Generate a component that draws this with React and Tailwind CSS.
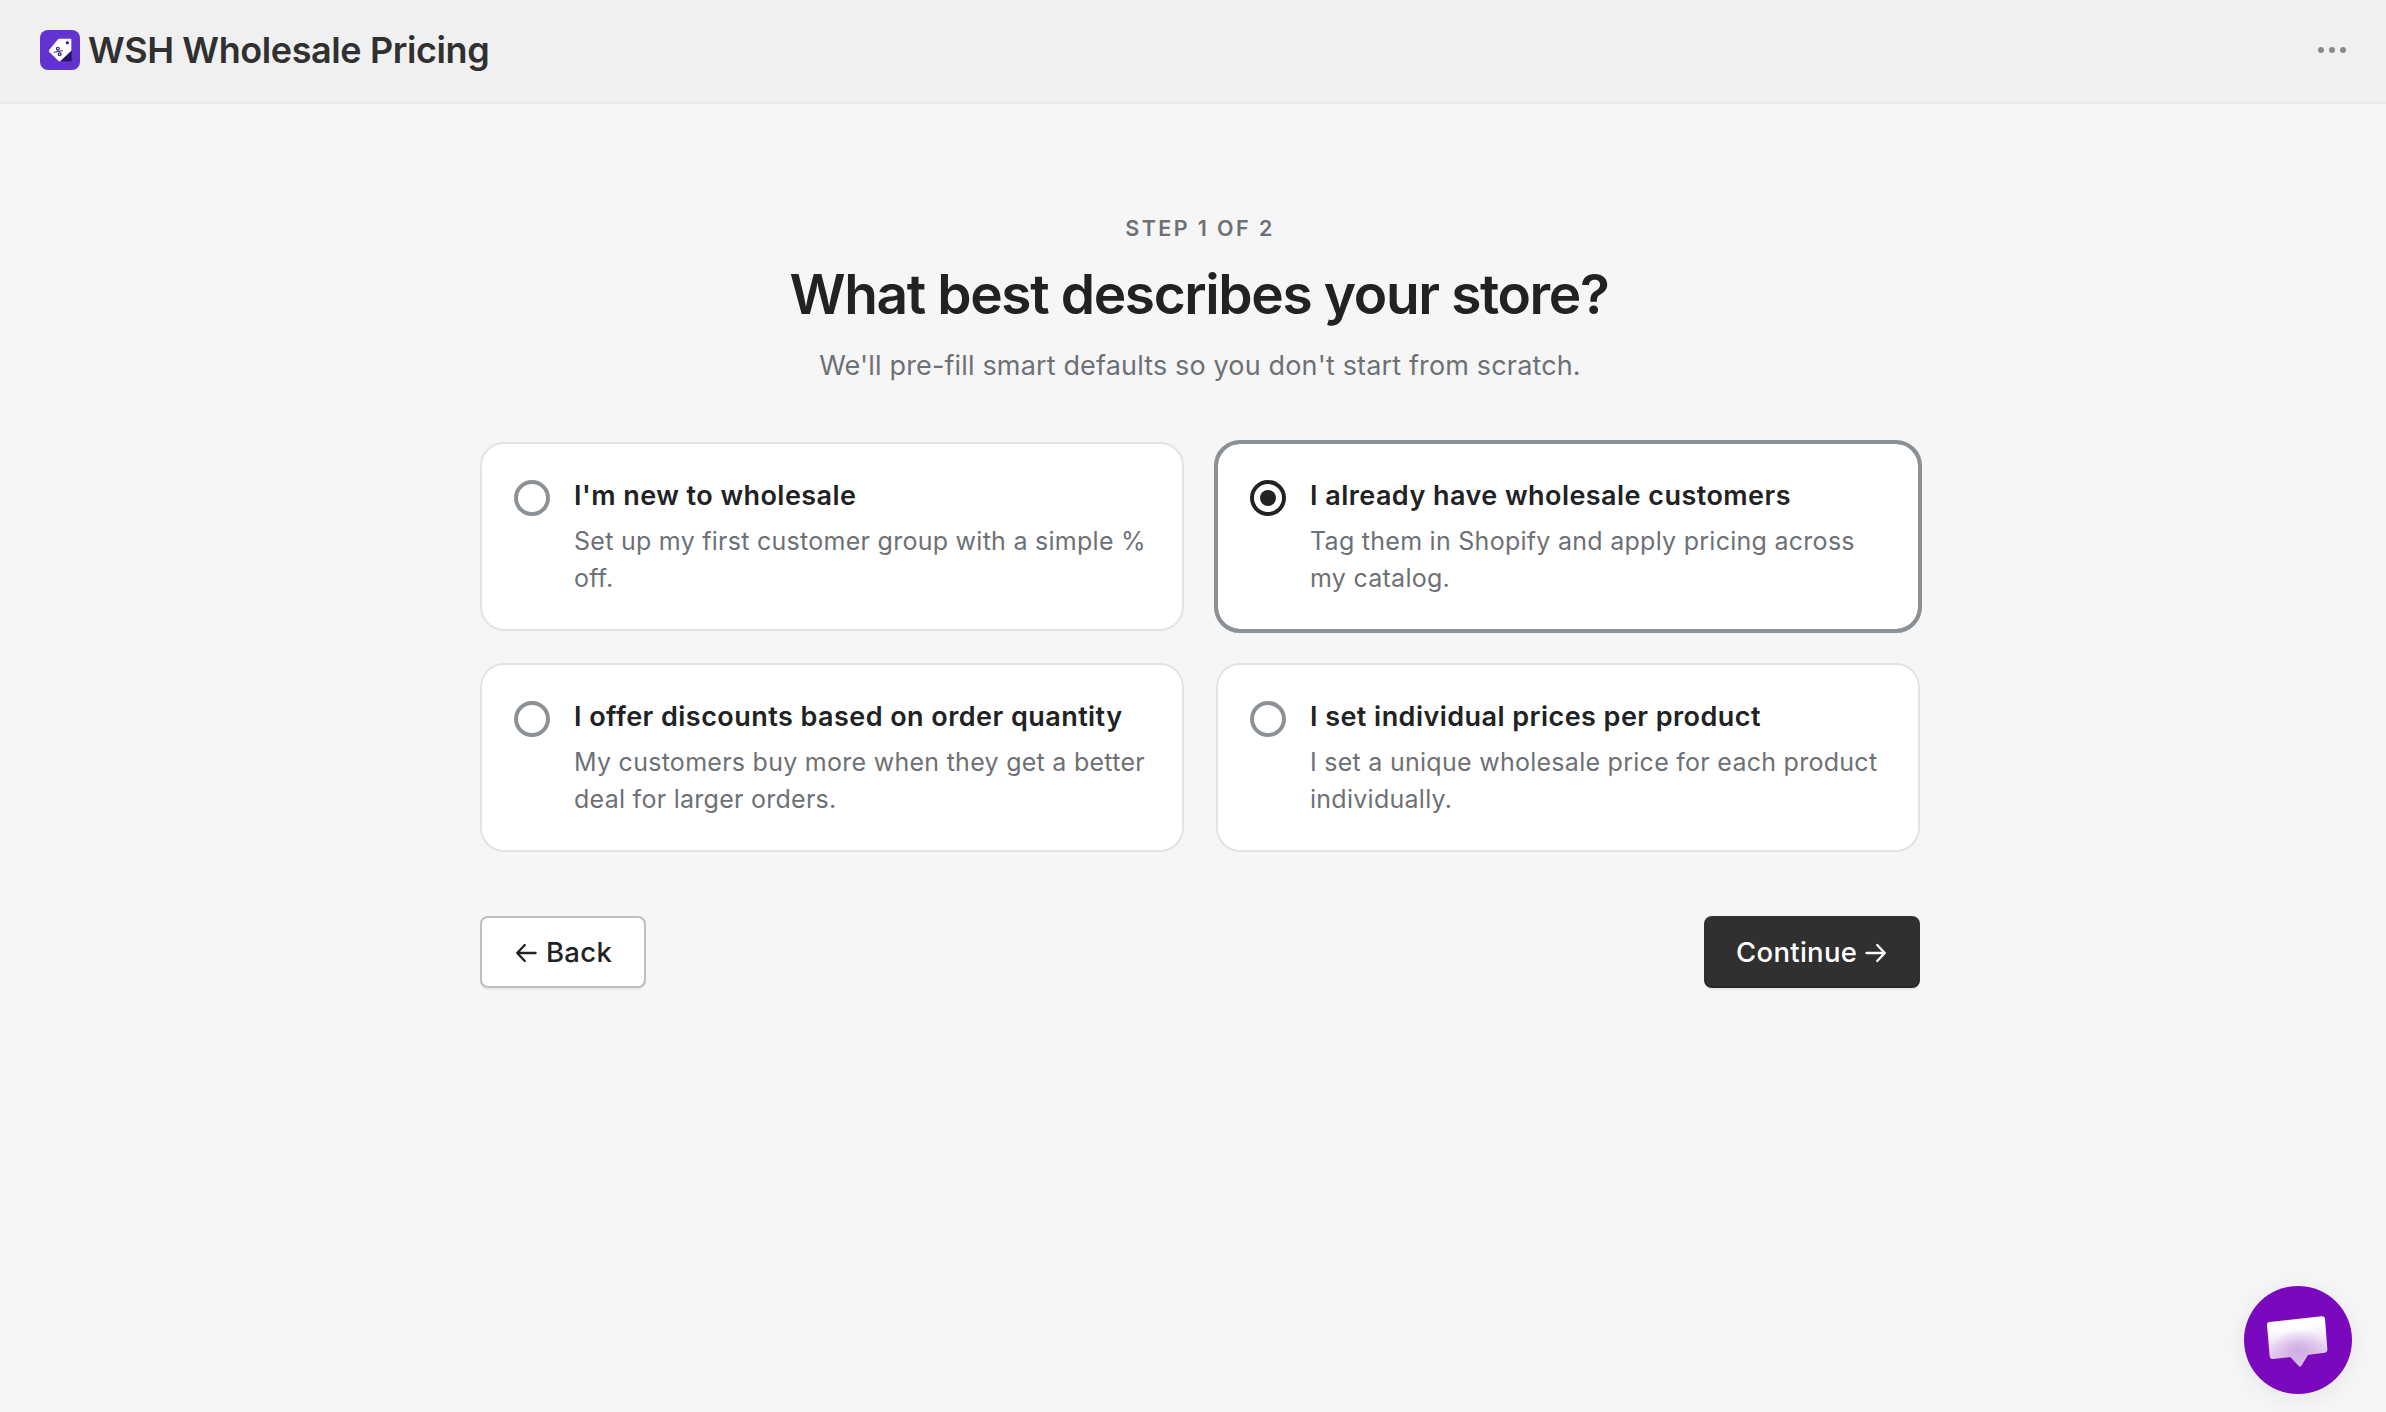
const OPTIONS = [
  {
    title: "I'm new to wholesale",
    text: "Set up my first customer group with a simple % off.",
  },
  {
    title: "I already have wholesale customers",
    text: "Tag them in Shopify and apply pricing across my catalog.",
    selected: true,
  },
  {
    title: "I offer discounts based on order quantity",
    text: "My customers buy more when they get a better deal for larger orders.",
  },
  {
    title: "I set individual prices per product",
    text: "I set a unique wholesale price for each product individually.",
  },
];

function Logo() {
  return (
    <svg viewBox="0 0 120 120" className="size-10 shrink-0">
      <rect width="120" height="120" rx="24" fill="#6333cf" />
      <path d="M94 62v31H63z" fill="#26136b" stroke="#26136b" strokeWidth="2" strokeLinejoin="round" />
      <path
        d="M58 26 92 26a2 2 0 0 1 2 2v34L62 92a5 5 0 0 1-7 0L28 66a5 5 0 0 1 0-7L54 28a5 5 0 0 1 4-2z"
        fill="#fff"
      />
      <circle cx="82" cy="38" r="4.600" fill="#26136b" />
      <g fill="none" stroke="#2b1a72" strokeWidth="3.600">
        <circle cx="53.500" cy="56" r="4.200" />
        <circle cx="59" cy="73" r="4.200" />
        <path d="m42 67 26-5" strokeWidth="3" />
      </g>
    </svg>
  );
}

function Header() {
  return (
    <header className="flex h-[104px] items-center justify-between border-b-2 border-[#e9e9e9] bg-[#f0f0f0] px-10 pb-0.5">
      <div className="flex items-center gap-2">
        <Logo />
        <span className="text-[36px] leading-10 font-semibold tracking-[-0.4px] text-[#303030]">
          WSH Wholesale Pricing
        </span>
      </div>
      <button className="flex gap-[5px]" aria-label="More actions">
        <span className="size-1.5 rounded-full bg-[#8a8a8a]" />
        <span className="size-1.5 rounded-full bg-[#8a8a8a]" />
        <span className="size-1.5 rounded-full bg-[#8a8a8a]" />
      </button>
    </header>
  );
}

function Radio({ selected }) {
  return (
    <span
      className={
        "flex size-9 shrink-0 items-center justify-center rounded-full border-4 bg-white " +
        (selected ? "border-[#202223]" : "border-[#8c9196]")
      }
    >
      {selected && <span className="size-4 rounded-full bg-[#202223]" />}
    </span>
  );
}

function OptionCard({ title, text, selected }) {
  return (
    <div
      className={
        "flex h-[189px] gap-6 rounded-[24px] border-2 bg-white py-[34px] pr-8 pl-8 " +
        (selected ? "border-[#8c9196] outline-4 -outline-offset-2 outline-[#8c9196]" : "border-[#e3e3e3]")
      }
    >
      <div className="pt-0.5">
        <Radio selected={selected} />
      </div>
      <div className="min-w-0 flex-1 pt-px">
        <h2 className="text-[27px] leading-[34px] font-semibold tracking-[0.45px] text-[#202223]">{title}</h2>
        <p className="mt-2.5 text-[25px] leading-[37px] tracking-[0.27px] text-[#6d7175]">{text}</p>
      </div>
    </div>
  );
}

function Arrow({ left }) {
  return (
    <svg
      viewBox="0 0 22 22"
      className={left ? "w-[22px]" : "w-[22px] rotate-180"}
      fill="none"
      stroke="currentColor"
      strokeWidth="2.400"
      strokeLinecap="round"
      strokeLinejoin="round"
    >
      <path d="M20.500 11H2.400M9.800 3 2.200 11l7.600 8" />
    </svg>
  );
}

function ChatButton() {
  return (
    <button
      aria-label="Chat"
      className="fixed right-[34px] bottom-[18px] size-[108px] rounded-full bg-[#7a09bd] shadow-[0_4px_24px_rgba(0,0,0,0.07)]"
    >
      <svg viewBox="72 78 324 324" className="size-full">
        <defs>
          <linearGradient id="bubble" x1="225" y1="175" x2="236" y2="300" gradientUnits="userSpaceOnUse">
            <stop offset="0.200" stopColor="#fff" />
            <stop offset="1" stopColor="#dcc2ea" />
          </linearGradient>
          <radialGradient
            id="glow"
            cx="0"
            cy="0"
            r="1"
            gradientUnits="userSpaceOnUse"
            gradientTransform="translate(235 272) rotate(-5) scale(92 62)"
          >
            <stop offset="0" stopColor="#cba3e0" stopOpacity="0.850" />
            <stop offset="0.500" stopColor="#cba3e0" stopOpacity="0.450" />
            <stop offset="1" stopColor="#cba3e0" stopOpacity="0" />
          </radialGradient>
        </defs>
        {["url(#bubble)", "url(#glow)"].map((fill) => (
          <path
            key={fill}
            fill={fill}
            d="M149 186 305 168.500Q314 168 315 177L322 267Q323 276 314 278L264 284 244 317Q240 322 236 317L211 291 159 297Q150 298 149 288L141 196Q140 187 149 186z"
          />
        ))}
      </svg>
    </button>
  );
}

export default function App() {
  return (
    <div className="min-h-screen bg-[#f6f6f6] font-['Inter',sans-serif] antialiased">
      <Header />
      <main className="flex justify-center pt-[108px] pl-3.5">
        <div className="w-[1440px]">
          <div className="flex flex-col items-center text-center">
            <p className="text-[21.5px] leading-8 font-semibold tracking-[2.4px] text-[#6d7175]">STEP 1 OF 2</p>
            <h1 className="mt-4 pr-0.5 text-[55px] leading-[68px] font-semibold tracking-[-1.37px] text-[#202223]">
              What best describes your store?
            </h1>
            <p className="mt-[18px] text-[27px] leading-10 tracking-[0.15px] text-[#6d7175]">
              We'll pre-fill smart defaults so you don't start from scratch.
            </p>
          </div>
          <div className="mt-14 grid grid-cols-2 gap-8">
            {OPTIONS.map((option) => (
              <OptionCard key={option.title} {...option} />
            ))}
          </div>
          <div className="mt-16 flex justify-between">
            <button className="flex h-[72px] w-[166px] items-center gap-[9px] rounded-lg border-2 border-[#babfc3] bg-white pt-px pl-[33px] text-[27.5px] font-[450] tracking-[0.3px] text-[#202223] shadow-[0_2px_0_rgba(0,0,0,0.05)]">
              <Arrow left />
              Back
            </button>
            <button className="flex h-[72px] w-[216px] items-center gap-2 rounded-lg bg-[#303030] pt-px pl-8 text-[27.5px] font-[450] tracking-[0.3px] text-white shadow-[0_2px_0_rgba(0,0,0,0.05),inset_0_-2px_0_rgba(0,0,0,0.2)]">
              Continue
              <Arrow />
            </button>
          </div>
        </div>
      </main>
      <ChatButton />
    </div>
  );
}
